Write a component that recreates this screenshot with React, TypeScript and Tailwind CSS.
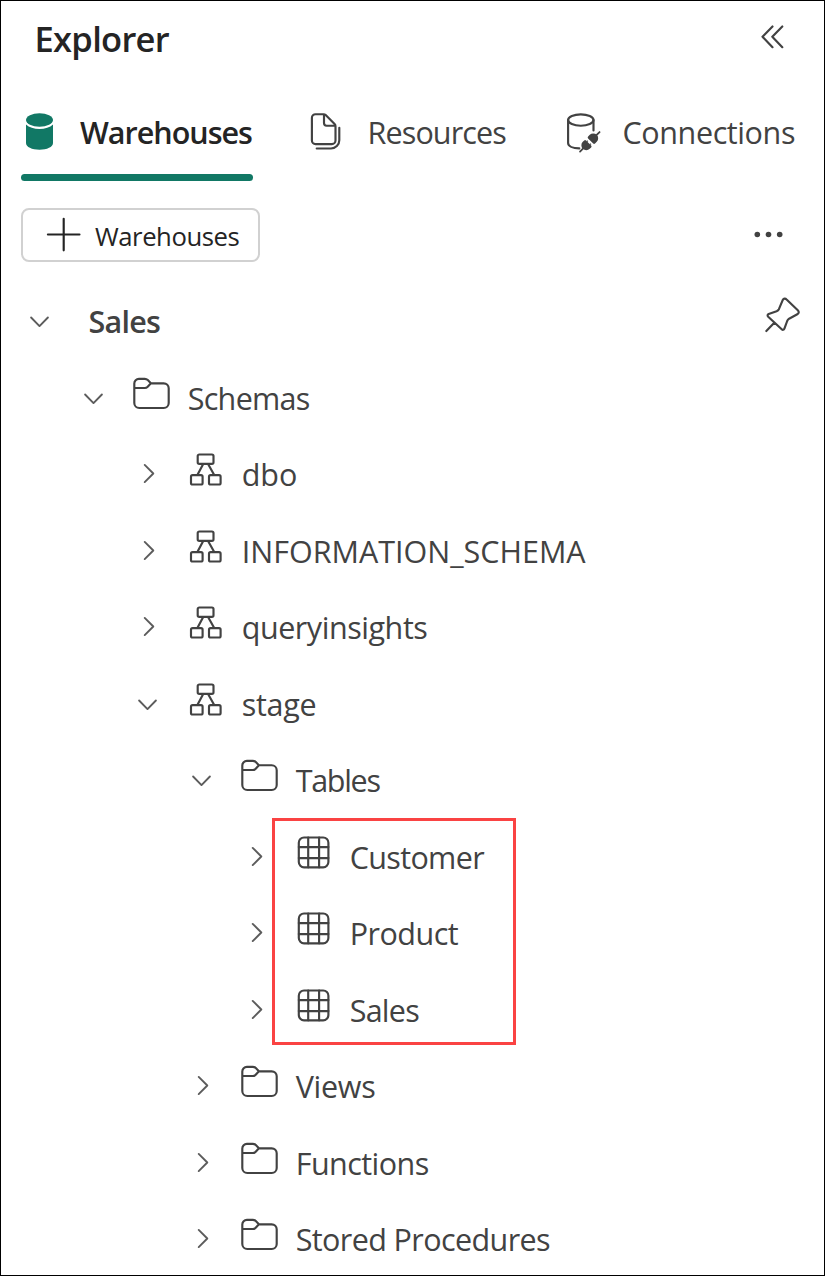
import type { ReactNode } from "react";

type IconKind = "folder" | "schema" | "table" | "none";

interface Item {
  label: string;
  depth: 0 | 1 | 2 | 3 | 4;
  icon: IconKind;
  open?: boolean;
  className?: string;
}

const indent = ["pl-[18px]", "pl-[72px]", "pl-[126px]", "pl-[180px]", "pl-[234px]"];

function Icon({ children, className = "" }: { children: ReactNode; className?: string }) {
  return (
    <svg
      viewBox="-0.5 -0.5 40 40"
      className={`h-10 w-10 shrink-0 overflow-visible ${className}`}
      fill="none"
      stroke="currentColor"
      strokeWidth={2.15}
      strokeLinejoin="round"
      strokeLinecap="round"
      aria-hidden="true"
    >
      {children}
    </svg>
  );
}

function Chevron({ open }: { open?: boolean }) {
  return (
    <Icon className="text-[#5c5c5c]">
      <path strokeWidth={1.9} d={open ? "M11.6 16 20 24.6 28.4 16" : "M17.2 10.4 25.8 19 17.2 27.6"} />
    </Icon>
  );
}

function FolderIcon() {
  return (
    <Icon className="-mt-[10px]">
      <path d="M2.8 14.5V9.9a4.6 4.6 0 0 1 4.6-4.6h5.9c1.3 0 2.2.5 3 1.3l3.1 3.2h12.8a5 5 0 0 1 5 5v14.7a5 5 0 0 1-5 5H7.8a5 5 0 0 1-5-5zh10.4c1.3 0 2.2-.5 3-1.3l3.2-3.4" />
    </Icon>
  );
}

function SchemaIcon() {
  return (
    <Icon className="-mt-[8.4px]">
      <rect x="12.2" y="4" width="15.8" height="9.4" rx="1.6" />
      <rect x="5.5" y="24.6" width="11.6" height="9.4" rx="1.6" />
      <rect x="23.5" y="24.6" width="11.6" height="9.4" rx="1.6" />
      <path d="M17.6 13.7 12 24.3M22.7 13.7l5.9 10.6" />
    </Icon>
  );
}

function TableIcon() {
  return (
    <Icon className="-mt-[10px]">
      <rect x="5.3" y="5" width="29.6" height="29.8" rx="5.2" />
      <path d="M14.7 5v29.8M25.6 5v29.8M5.3 14.6h29.6M5.3 25.6h29.6" />
    </Icon>
  );
}

function Row({ item, action }: { item: Item; action?: ReactNode }) {
  return (
    <div className={`flex h-[76.5px] items-center ${indent[item.depth]}`}>
      <Chevron open={item.open} />
      {item.icon !== "none" && (
        <span className="ml-[18px] flex">
          {item.icon === "folder" && <FolderIcon />}
          {item.icon === "schema" && <SchemaIcon />}
          {item.icon === "table" && <TableIcon />}
        </span>
      )}
      <span className={`whitespace-nowrap ${item.icon === "none" ? "ml-[29.5px] font-semibold" : "ml-[16.7px]"} ${item.className ?? ""}`}>
        {item.label}
      </span>
      {action}
    </div>
  );
}

const schemas: Item[] = [
  { label: "Schemas", depth: 1, icon: "folder", open: true, className: "tracking-[-0.7px]" },
  { label: "dbo", depth: 2, icon: "schema" },
  { label: "INFORMATION_SCHEMA", depth: 2, icon: "schema" },
  { label: "queryinsights", depth: 2, icon: "schema", className: "tracking-[-0.45px]" },
  { label: "stage", depth: 2, icon: "schema", open: true, className: "tracking-[-0.25px]" },
  { label: "Tables", depth: 3, icon: "folder", open: true, className: "tracking-[-1.3px]" },
];

const tables: Item[] = [
  { label: "Customer", depth: 4, icon: "table", className: "tracking-[-0.65px]" },
  { label: "Product", depth: 4, icon: "table", className: "tracking-[-0.5px]" },
  { label: "Sales", depth: 4, icon: "table", className: "tracking-[-0.75px]" },
];

const others: Item[] = [
  { label: "Views", depth: 3, icon: "folder", className: "tracking-[-0.3px]" },
  { label: "Functions", depth: 3, icon: "folder", className: "tracking-[-0.55px]" },
  { label: "Stored Procedures", depth: 3, icon: "folder", className: "tracking-[-0.6px]" },
];

export default function App() {
  return (
    <div className="flex h-[1276px] w-[825px] flex-col overflow-hidden border border-black bg-white font-['Open_Sans','Noto_Sans',sans-serif] text-[30.5px] leading-[40px] text-[#424242]">
      <header className="flex h-[76px] shrink-0 items-center justify-between pl-[33.5px] pr-[30px]">
        <h1 className="text-[34.5px] font-semibold tracking-[-0.7px] text-[#242424]">Explorer</h1>
        <Icon className="-mt-[7px]">
          <path d="M18 10 8 20.300l10 10.400M27.800 10 17.800 20.300l10 10.400" />
        </Icon>
      </header>

      <nav className="flex h-[104px] shrink-0 items-start pl-[20px] pt-[27px]">
        <button className="flex h-[77px] w-[232px] flex-col text-[#242424]">
          <span className="flex h-[58px] items-center">
            <svg viewBox="0 0 40 44" className="-ml-px -mt-[2px] h-[44px] w-10 shrink-0 fill-[#117865]" aria-hidden="true">
              <ellipse cx="19.5" cy="10" rx="13.5" ry="6.8" />
              <path d="M6 14.6c3 2.9 8 4.5 13.5 4.5S30 17.5 33 14.6V33c0 4-6 6.7-13.5 6.7S6 37 6 33z" />
            </svg>
            <span className="-mt-[2px] ml-[20px] font-semibold tracking-[-1px]">Warehouses</span>
          </span>
          <span className="mt-[12px] h-[7px] w-[232px] rounded-full bg-[#117865]" />
        </button>
        <button className="ml-[53px] flex h-[58px] items-center">
          <svg viewBox="0 0 40 44" className="-mt-[2px] h-[44px] w-10 shrink-0" fill="none" stroke="currentColor" strokeWidth="2.15" strokeLinejoin="round" strokeLinecap="round" aria-hidden="true">
            <path d="M9.5 4.2h8c.9 0 1.6.3 2.2.9l8.9 8.9c.6.6.9 1.3.9 2.2v14.3a3.6 3.6 0 0 1-3.6 3.6H9.5a3.6 3.6 0 0 1-3.6-3.6V7.8a3.6 3.6 0 0 1 3.6-3.6zM18 4.5v8.6a2.6 2.6 0 0 0 2.6 2.6h8.7M33.3 17.7v12.5a8.3 8.3 0 0 1-8.3 8.3H10.7" />
          </svg>
          <span className="-mt-[2px] ml-[21.5px] tracking-[-0.87px]">Resources</span>
        </button>
        <button className="ml-[56px] flex h-[58px] items-center">
          <svg viewBox="0 0 40 44" className="-mt-[2px] h-[44px] w-10 shrink-0" fill="none" stroke="currentColor" strokeWidth="2.15" strokeLinecap="round" aria-hidden="true">
            <ellipse cx="18.8" cy="10" rx="12.7" ry="5.7" />
            <path d="M6.1 10v23c0 3.2 4.6 5.3 11.2 5.4M31.5 10v10.500" />
            <g transform="translate(27.800 31.800) rotate(-45)">
              <path d="M9 0h4.800M-9 0h-4.800" strokeWidth="1.800" />
              <path d="M1.200-3.600q0-1.300 1.300-1.300h2.400a4.900 4.900 0 0 1 0 9.800h-2.400q-1.300 0-1.300-1.300zM-1.700-3.600q0-1.300-1.300-1.300h-2a4.900 4.900 0 0 0 0 9.800h2q1.300 0 1.300-1.300z" fill="currentColor" stroke="none" />
              <path d="M-1.700-2.200h1M-1.700 2.200h1" strokeWidth="1.400" strokeLinecap="butt" />
            </g>
          </svg>
          <span className="-mt-[2px] ml-[20.6px] tracking-[-0.4px]">Connections</span>
        </button>
      </nav>

      <div className="flex h-[102px] shrink-0 items-start justify-between pl-[20px] pr-[35px] pt-[27px]">
        <button className="flex h-[54px] w-[239px] items-center rounded-[8px] border-2 border-[#d1d1d1] text-[25.7px] text-[#242424]">
          <Icon className="-mt-[3px] ml-[20px]">
            <path d="M20.2 4.200v31.600M4.400 20h31.600" />
          </Icon>
          <span className="ml-[12px] mt-[3px] tracking-[-0.45px]">Warehouses</span>
        </button>
        <svg viewBox="0 0 40 40" className="mt-[6px] h-10 w-10" fill="currentColor" aria-hidden="true">
          <circle cx="8.3" cy="20.5" r="2.8" />
          <circle cx="19.5" cy="20.5" r="2.8" />
          <circle cx="30.7" cy="20.5" r="2.8" />
        </svg>
      </div>

      <main className="shrink-0">
        <Row
          item={{ label: "Sales", depth: 0, icon: "none", open: true, className: "tracking-[-0.75px]" }}
          action={
            <Icon className="-mt-[14px] ml-auto mr-[23px]">
              <path d="M21.3 5.400c.9-1.500 2.600-1.600 3.800-.4L36.300 15.700c1.400 1.400 1.300 3.200-.5 4.100l-8.200 4.400c-1 .6-1.500 1.300-1.900 2.300l-2.800 7.700c-.5 1.300-1.700 1.500-2.700.5L6.700 22.200c-1-1-.8-2.200.5-2.700l7.900-2.800c1-.4 1.800-1 2.300-2zM12.800 28.300l-8 8.200" />
            </Icon>
          }
        />
        {schemas.map((item) => (
          <Row key={item.label} item={item} />
        ))}
        <div className="relative">
          {tables.map((item) => (
            <Row key={item.label} item={item} />
          ))}
          <div className="pointer-events-none absolute left-[271px] top-[-0.5px] h-[227px] w-[244px] border-3 border-[#fa4343]" />
        </div>
        {others.map((item) => (
          <Row key={item.label} item={item} />
        ))}
      </main>
    </div>
  );
}
